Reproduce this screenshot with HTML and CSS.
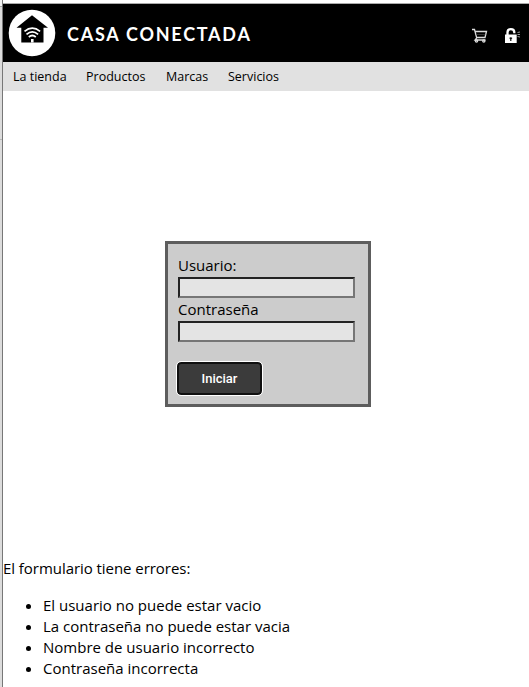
FILE: index.html
```html
<!DOCTYPE html>
<html lang="es">
<head>
<meta charset="utf-8">
<title>Casa Conectada</title>
<link rel="stylesheet" href="styles.css">
</head>
<body>
<div class="edge"><div class="edge-top"></div><div class="edge-mid"></div></div>
<div class="page">
  <header class="header">
    <svg class="logo" viewBox="0 0 48 48">
      <circle cx="24" cy="24" r="23.3" fill="#fff"/>
      <path d="M24 6.300 L40 18.800 H35.500 V33.500 H13.300 V18.800 H8.500 Z" fill="#000"/>
      <g fill="none" stroke="#fff" stroke-width="1.700">
        <path d="M16.500 22.300 Q24.300 15.800 32.100 22.300"/>
        <path d="M18.500 25.300 Q24.300 20.300 30.100 25.300"/>
        <path d="M20.800 28 Q24.300 25 27.800 28"/>
      </g>
      <path d="M23 30 h2.600 v3.500 h-2.600 Z" fill="#fff"/>
    </svg>
    <span class="brand">CASA CONECTADA</span>
    <svg class="cart" viewBox="0 0 16 16" fill="none" stroke="#ddd" stroke-width="1.300">
      <path d="M0 1.500 H2.500 L4.700 9.800 L3 12 H13.500 M3.200 3.500 H14.500 L13 9.500 H4.700"/>
      <path d="M4 6.500 H13.500" stroke="#555" stroke-width=".6"/>
      <circle cx="4.500" cy="13" r="1.100"/><circle cx="11.800" cy="13" r="1.100"/>
    </svg>
    <svg class="lock" viewBox="0 0 16 16">
      <path d="M2.500 8 V4.500 Q2.500 1.200 5.800 1.200 Q9.300 1.200 9.300 4.300 V5.200" fill="none" stroke="#fff" stroke-width="2.300"/>
      <path d="M0 6.500 H11.700 V15 H0 Z" fill="#fff"/>
      <path d="M4.200 10 Q5.800 8.300 7.400 10 L6.400 11.200 V13 H5.200 V11.200 Z" fill="#111"/>
      <path d="M12.500 4.500 L15 4 M12.500 6.500 H15 M12.500 8.500 L15 9" stroke="#999" stroke-width="1"/>
    </svg>
  </header>
  <nav class="nav"><a class="n1">La tienda</a><a class="n2">Productos</a><a class="n3">Marcas</a><a class="n4">Servicios</a></nav>
  <main class="main">
    <form class="login">
      <label for="user">Usuario:</label>
      <input id="user" type="text">
      <label for="pass">Contraseña</label>
      <input id="pass" type="password">
      <button type="button">Iniciar</button>
    </form>
  </main>
  <section class="errors">
    <p>El formulario tiene errores:</p>
    <ul>
      <li>El usuario no puede estar vacio</li>
      <li>La contraseña no puede estar vacia</li>
      <li>Nombre de usuario incorrecto</li>
      <li>Contraseña incorrecta</li>
    </ul>
  </section>
</div>
</body>
</html>
```
FILE: styles.css
```css
* { box-sizing: border-box; }
body {
  margin: 0;
  height: 687px;
  overflow: hidden;
  display: flex;
  background: #fff;
  color: #000;
  font: 15px/21px "Open Sans", "Noto Sans", sans-serif;
}
.edge { width: 3px; height: 687px; background: #dcdcdc; border-right: 1px solid #777; }
.edge-top { height: 7px; background: #f3f3f3; border-bottom: 1px solid #aaa; }
.edge-mid { height: 133px; border-bottom: 1px solid #b8b8b8; }
.page { flex: 1; padding-top: 3px; }
.header {
  height: 59px;
  border-top: 1px solid #aaa;
  background: #000;
  display: flex;
  align-items: flex-start;
  padding-left: 5px;
}
.logo { width: 48px; height: 48px; margin-top: 5px; }
.brand {
  width: 416px;
  padding: 19px 0 0 11px;
  color: #fff;
  font: 700 18px/22px Lato, sans-serif;
  letter-spacing: 1.75px;
  white-space: nowrap;
}
.header svg { flex: none; }
.cart { width: 16px; height: 16px; margin-top: 24px; }
.lock { width: 16px; height: 16px; margin: 24px 0 0 17px; }
.nav {
  height: 29px;
  padding-left: 10px;
  background: #e1e1e1;
  display: flex;
  gap: 20px;
  font-size: 12.5px;
  line-height: 29px;
  white-space: nowrap;
}
.n1 { width: 53px; }
.n2 { width: 60px; }
.n3 { width: 42px; }
.main { height: 467px; padding: 150px 0 0 162px; }
.login {
  width: 206px;
  height: 166px;
  border: 3px solid #5d5d5d;
  background: #ccc;
  padding: 10px 9px 9px 10px;
  display: flex;
  flex-direction: column;
}
.login > * { flex: none; }
label { height: 23px; line-height: 22px; }
input {
  width: 177px;
  height: 21px;
  padding: 0;
  border: 2px solid;
  border-color: #222 #767676 #767676 #222;
  background: #e4e4e4;
}
button {
  width: 85px;
  height: 33px;
  margin: 20px 0 0 -1px;
  padding: 0;
  border: 2px solid #101010;
  border-radius: 4px;
  outline: 1px solid #fff;
  background: #3b3b3b;
  color: #fff;
  font: 500 13px Roboto, sans-serif;
}
.errors p { margin: 0 0 16px; letter-spacing: -0.05px; }
.errors ul { margin: 0; padding-left: 40px; }
.errors { white-space: nowrap; }
```
